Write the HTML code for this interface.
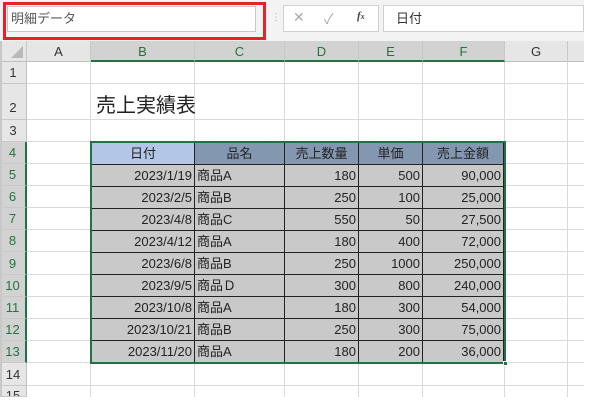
<!DOCTYPE html>
<html><head><meta charset="utf-8"><style>
*{margin:0;padding:0;box-sizing:border-box}
body{width:600px;height:409px;background:#fff;position:relative;overflow:hidden;font-family:"Liberation Sans","Noto Sans CJK JP",sans-serif;}
.a{position:absolute}
.top{left:0;top:0;width:584px;height:41px;background:#f3f3f3}
.ch{position:absolute;top:41px;height:21px;background:#e6e6e6;border-right:1px solid #c8c8c8;border-bottom:1px solid #c0c0c0;font-size:13px;color:#333;text-align:center;line-height:21px}
.ch.s{background:#d2d2d2;color:#217346;border-bottom:2px solid #217346}
.rh{position:absolute;left:0;width:27px;background:#e6e6e6;border-bottom:1px solid #c8c8c8;border-right:1px solid #c0c0c0;font-size:13px;color:#333;text-align:center}
.rh.s{background:#d2d2d2;color:#217346;border-right:2px solid #217346}
.vl{position:absolute;top:62px;width:1px;height:335px;background:#dadada}
.hl{position:absolute;left:27px;width:557px;height:1px;background:#dadada}
.c{position:absolute;height:22px;line-height:22px;font-size:13px;color:#222;background:#c9c9c9;border-right:1px solid #222;border-bottom:1px solid #222;padding:0 2px;white-space:nowrap}
.r{text-align:right}
</style></head><body>
<div class="a top"></div>
<div class="a" style="left:3px;top:2px;width:263px;height:38px;border:3px solid #e8202a"></div>
<div class="a" style="left:7px;top:6px;width:249px;height:26px;background:#fff;border:1px solid #c6c6c6;font-size:13px;color:#555;line-height:24px;padding-left:3px">明細データ</div>
<div class="a" style="left:271px;top:12px;color:#aaa;font-size:10px">⋮</div>
<div class="a" style="left:283px;top:5px;width:96px;height:27px;background:#fff;border:1px solid #d0d0d0"></div>
<div class="a" style="left:293px;top:9px;color:#aaa;font-size:14px">✕</div>
<div class="a" style="left:324px;top:9px;color:#aaa;font-size:14px">✓</div>
<div class="a" style="left:357px;top:10px;color:#444;font-size:11px;font-style:italic;font-family:'Liberation Serif',serif;font-weight:bold">f<span style="font-size:8px">x</span></div>
<div class="a" style="left:383px;top:5px;width:201px;height:27px;background:#fff;border:1px solid #d0d0d0;font-size:13px;color:#333;line-height:25px;padding-left:12px">日付</div>

<div class="ch" style="left:0;width:27px;background:#e6e6e6"><div style="position:absolute;right:3px;bottom:3px;width:0;height:0;border-left:12px solid transparent;border-bottom:12px solid #b8b8b8"></div></div>
<div class="ch" style="left:27px;width:64px">A</div>
<div class="ch s" style="left:91px;width:104px">B</div>
<div class="ch s" style="left:195px;width:90px">C</div>
<div class="ch s" style="left:285px;width:74px">D</div>
<div class="ch s" style="left:359px;width:64px">E</div>
<div class="ch s" style="left:423px;width:82px">F</div>
<div class="ch" style="left:505px;width:63px">G</div>
<div class="ch" style="left:568px;width:16px;border-right:none"></div>

<div class="vl" style="left:90px"></div><div class="vl" style="left:194px"></div><div class="vl" style="left:284px"></div><div class="vl" style="left:358px"></div><div class="vl" style="left:422px"></div><div class="vl" style="left:504px"></div><div class="vl" style="left:567px"></div>
<div class="hl" style="top:83px"></div><div class="hl" style="top:119px"></div><div class="hl" style="top:141px"></div><div class="hl" style="top:163px"></div><div class="hl" style="top:185px"></div><div class="hl" style="top:207px"></div><div class="hl" style="top:229px"></div><div class="hl" style="top:251px"></div><div class="hl" style="top:274px"></div><div class="hl" style="top:296px"></div><div class="hl" style="top:318px"></div><div class="hl" style="top:340px"></div><div class="hl" style="top:362px"></div><div class="hl" style="top:385px"></div>

<div class="rh" style="top:62px;height:22px;line-height:22px">1</div>
<div class="rh" style="top:84px;height:36px;line-height:48px">2</div>
<div class="rh" style="top:120px;height:22px;line-height:22px">3</div>
<div class="rh s" style="top:142px;height:22px;line-height:22px">4</div>
<div class="rh s" style="top:164px;height:22px;line-height:22px">5</div>
<div class="rh s" style="top:186px;height:22px;line-height:22px">6</div>
<div class="rh s" style="top:208px;height:22px;line-height:22px">7</div>
<div class="rh s" style="top:230px;height:22px;line-height:22px">8</div>
<div class="rh s" style="top:252px;height:23px;line-height:23px">9</div>
<div class="rh s" style="top:275px;height:22px;line-height:22px">10</div>
<div class="rh s" style="top:297px;height:22px;line-height:22px">11</div>
<div class="rh s" style="top:319px;height:22px;line-height:22px">12</div>
<div class="rh s" style="top:341px;height:22px;line-height:22px">13</div>
<div class="rh" style="top:363px;height:23px;line-height:23px">14</div>
<div class="rh" style="top:386px;height:11px;line-height:20px;overflow:hidden">15</div>
<div class="a" style="left:0;top:41px;width:2px;height:356px;background:#c8c8c8"></div>

<div class="a" style="left:96px;top:89px;font-size:20px;color:#222">売上実績表</div>

<div class="c" style="left:92px;top:143px;width:103px;background:#b4c6e7;text-align:center">日付</div>
<div class="c" style="left:195px;top:143px;width:90px;background:#8497b0;text-align:center">品名</div>
<div class="c" style="left:285px;top:143px;width:74px;background:#8497b0;text-align:center">売上数量</div>
<div class="c" style="left:359px;top:143px;width:64px;background:#8497b0;text-align:center">単価</div>
<div class="c" style="left:423px;top:143px;width:81px;background:#8497b0;text-align:center">売上金額</div>

<div class="c r" style="left:92px;top:165px;width:103px">2023/1/19</div><div class="c" style="left:195px;top:165px;width:90px">商品A</div><div class="c r" style="left:285px;top:165px;width:74px">180</div><div class="c r" style="left:359px;top:165px;width:64px">500</div><div class="c r" style="left:423px;top:165px;width:81px">90,000</div>
<div class="c r" style="left:92px;top:187px;width:103px">2023/2/5</div><div class="c" style="left:195px;top:187px;width:90px">商品B</div><div class="c r" style="left:285px;top:187px;width:74px">250</div><div class="c r" style="left:359px;top:187px;width:64px">100</div><div class="c r" style="left:423px;top:187px;width:81px">25,000</div>
<div class="c r" style="left:92px;top:209px;width:103px">2023/4/8</div><div class="c" style="left:195px;top:209px;width:90px">商品C</div><div class="c r" style="left:285px;top:209px;width:74px">550</div><div class="c r" style="left:359px;top:209px;width:64px">50</div><div class="c r" style="left:423px;top:209px;width:81px">27,500</div>
<div class="c r" style="left:92px;top:231px;width:103px">2023/4/12</div><div class="c" style="left:195px;top:231px;width:90px">商品A</div><div class="c r" style="left:285px;top:231px;width:74px">180</div><div class="c r" style="left:359px;top:231px;width:64px">400</div><div class="c r" style="left:423px;top:231px;width:81px">72,000</div>
<div class="c r" style="left:92px;top:253px;width:103px">2023/6/8</div><div class="c" style="left:195px;top:253px;width:90px">商品B</div><div class="c r" style="left:285px;top:253px;width:74px">250</div><div class="c r" style="left:359px;top:253px;width:64px">1000</div><div class="c r" style="left:423px;top:253px;width:81px">250,000</div>
<div class="c r" style="left:92px;top:275px;width:103px">2023/9/5</div><div class="c" style="left:195px;top:275px;width:90px">商品Ｄ</div><div class="c r" style="left:285px;top:275px;width:74px">300</div><div class="c r" style="left:359px;top:275px;width:64px">800</div><div class="c r" style="left:423px;top:275px;width:81px">240,000</div>
<div class="c r" style="left:92px;top:297px;width:103px">2023/10/8</div><div class="c" style="left:195px;top:297px;width:90px">商品A</div><div class="c r" style="left:285px;top:297px;width:74px">180</div><div class="c r" style="left:359px;top:297px;width:64px">300</div><div class="c r" style="left:423px;top:297px;width:81px">54,000</div>
<div class="c r" style="left:92px;top:319px;width:103px">2023/10/21</div><div class="c" style="left:195px;top:319px;width:90px">商品B</div><div class="c r" style="left:285px;top:319px;width:74px">250</div><div class="c r" style="left:359px;top:319px;width:64px">300</div><div class="c r" style="left:423px;top:319px;width:81px">75,000</div>
<div class="c r" style="left:92px;top:341px;width:103px">2023/11/20</div><div class="c" style="left:195px;top:341px;width:90px">商品A</div><div class="c r" style="left:285px;top:341px;width:74px">180</div><div class="c r" style="left:359px;top:341px;width:64px">200</div><div class="c r" style="left:423px;top:341px;width:81px">36,000</div>

<div class="a" style="left:90px;top:141px;width:416px;height:223px;border:2px solid #217346"></div>
<div class="a" style="left:503px;top:361px;width:5px;height:5px;background:#217346;border:1px solid #fff"></div>
</body></html>
